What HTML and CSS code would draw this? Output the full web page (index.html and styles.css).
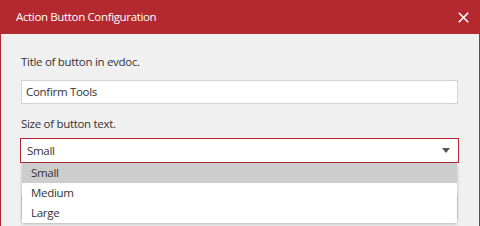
FILE: index.html
```html
<!DOCTYPE html>
<html>
<head>
	<meta charset="utf-8">
	<link rel="stylesheet" href="styles.css">
</head>
<body>
	<div class="dialog">
		<div class="dlg-head">
			<span class="dlg-title">Action Button Configuration</span>
			<span class="dlg-close">
				<svg width="11" height="11" viewBox="0 0 11 11"><path d="M0.8 0.8L10.2 10.2M10.2 0.8L0.8 10.2" stroke="#fff" stroke-width="1.6" fill="none"/></svg>
			</span>
		</div>
		<div class="dlg-body">
			<div class="field">
				<label class="lbl">Title of button in evdoc.</label>
				<div class="txt">Confirm Tools</div>
			</div>
			<div class="field field-sel">
				<label class="lbl">Size of button text.</label>
				<div class="sel">
					<span>Small</span>
					<i class="arrow"></i>
				</div>
				<ul class="sel-list">
					<li class="on">Small</li>
					<li>Medium</li>
					<li>Large</li>
				</ul>
			</div>
			<div class="txt txt-under"></div>
		</div>
	</div>
</body>
</html>
```

FILE: styles.css
```css
*{margin:0;padding:0;box-sizing:border-box;}
ul{list-style:none;}
body{
	font-family:"Open Sans","Noto Sans",sans-serif;
	font-size:11.5px;
	color:#333;
	background:#f0f0f0;
}
.dialog{
	width:480px;
	height:226px;
	border-left:1px solid #b3292f;
	border-right:1px solid #b3292f;
	background:#f0f0f0;
	overflow:hidden;
}
.dlg-head{
	height:34px;
	background:#b3292f;
	display:flex;
	align-items:center;
	justify-content:space-between;
	padding:0 10px 0 15px;
	color:#fff;
}
.dlg-title{
	font-size:11.5px;
	letter-spacing:-0.35px;
	line-height:16px;
	margin-top:-1px;
}
.dlg-close{
	display:flex;
	margin-top:1px;
}
.dlg-body{
	padding:20px 20px 0 20px;
}
.lbl{
	display:block;
	line-height:16px;
	letter-spacing:-0.3px;
}
.txt{
	margin-top:10px;
	width:437px;
	height:24px;
	border:1px solid #cfd3da;
	background:#fff;
	padding:0 4px;
	line-height:22px;
	letter-spacing:-0.3px;
}
.field-sel{
	position:relative;
	padding-top:12px;
}
.sel{
	margin:6px -1px 0 -1px;
	width:439px;
	height:25px;
	border:1px solid #b3292f;
	background:#fff;
	padding:0 6px;
	display:flex;
	align-items:center;
	justify-content:space-between;
	letter-spacing:-0.3px;
}
.arrow{
	width:0;
	height:0;
	border-left:4px solid transparent;
	border-right:4px solid transparent;
	border-top:5px solid #555;
	margin-right:2px;
}
.sel-list{
	position:absolute;
	left:1px;
	top:59px;
	width:435px;
	background:#fff;
	box-shadow:0 1px 3px rgba(0,0,0,0.25);
	z-index:2;
}
.sel-list li{
	height:20px;
	line-height:20px;
	padding-left:9px;
	letter-spacing:-0.3px;
}
.sel-list li.on{
	background:#cdcdcd;
}
.txt-under{
	margin-top:32px;
}
```
